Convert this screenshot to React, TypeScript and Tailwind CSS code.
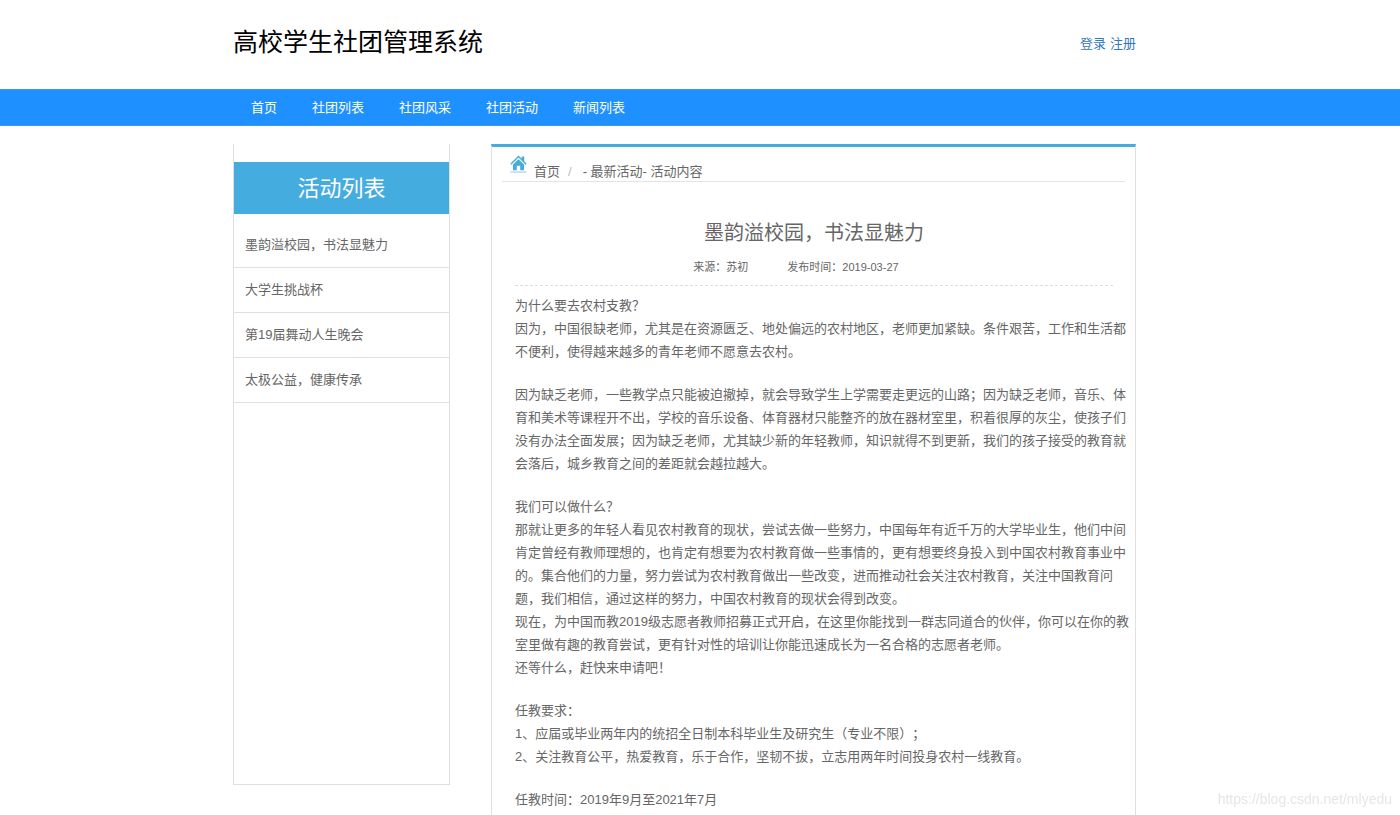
const navItems = ["首页", "社团列表", "社团风采", "社团活动", "新闻列表"];

const activities = [
  "墨韵溢校园，书法显魅力",
  "大学生挑战杯",
  "第19届舞动人生晚会",
  "太极公益，健康传承",
];

// each inner array is one block of the article, separated by a blank line
const articleBlocks = [
  [
    "为什么要去农村支教？",
    "因为，中国很缺老师，尤其是在资源匮乏、地处偏远的农村地区，老师更加紧缺。条件艰苦，工作和生活都不便利，使得越来越多的青年老师不愿意去农村。",
  ],
  [
    "因为缺乏老师，一些教学点只能被迫撤掉，就会导致学生上学需要走更远的山路；因为缺乏老师，音乐、体育和美术等课程开不出，学校的音乐设备、体育器材只能整齐的放在器材室里，积着很厚的灰尘，使孩子们没有办法全面发展；因为缺乏老师，尤其缺少新的年轻教师，知识就得不到更新，我们的孩子接受的教育就会落后，城乡教育之间的差距就会越拉越大。",
  ],
  [
    "我们可以做什么？",
    "那就让更多的年轻人看见农村教育的现状，尝试去做一些努力，中国每年有近千万的大学毕业生，他们中间肯定曾经有教师理想的，也肯定有想要为农村教育做一些事情的，更有想要终身投入到中国农村教育事业中的。集合他们的力量，努力尝试为农村教育做出一些改变，进而推动社会关注农村教育，关注中国教育问题，我们相信，通过这样的努力，中国农村教育的现状会得到改变。",
    "现在，为中国而教2019级志愿者教师招募正式开启，在这里你能找到一群志同道合的伙伴，你可以在你的教室里做有趣的教育尝试，更有针对性的培训让你能迅速成长为一名合格的志愿者老师。",
    "还等什么，赶快来申请吧！",
  ],
  [
    "任教要求：",
    "1、应届或毕业两年内的统招全日制本科毕业生及研究生（专业不限）；",
    "2、关注教育公平，热爱教育，乐于合作，坚韧不拔，立志用两年时间投身农村一线教育。",
  ],
  ["任教时间：2019年9月至2021年7月"],
];

const HomeIcon = () => {
  return (
    <svg className="h-[18px] w-[17px]" viewBox="0 0 17 18" fill="none" aria-hidden="true">
      <path d="M11.6 1.4h2.6v5.4l-2.6-2.4z" fill="#45acdf" />
      <path d="M0.8 9.2 8.5 1.6l7.7 7.6" stroke="#45acdf" strokeWidth="1.4" />
      <path d="M8.5 4.2 3 9.6v5.6h3.8v-4.4h3.4v4.4H14V9.6z" fill="#45acdf" />
      <path d="M0.5 17h16" stroke="#8ccbea" />
    </svg>
  );
};

const Header = () => {
  return (
    <header className="pr-[31px]">
      <div className="mx-auto flex h-[89px] max-w-[903px] items-start justify-between">
        <h1 className="pt-6 text-[25px] leading-[36px] text-black">高校学生社团管理系统</h1>
        <div className="flex gap-1 pt-[34px] leading-5 text-[#337ab7]">
          <a href="#login">登录</a>
          <a href="#register">注册</a>
        </div>
      </div>
    </header>
  );
};

const Nav = () => {
  return (
    <nav className="border-y border-[#3d97ee] bg-[#1e90ff] pr-[31px]">
      <ul className="mx-auto flex h-[35px] max-w-[903px] items-center gap-[35px] pl-[18px] text-white">
        {navItems.map((item) => (
          <li key={item}>
            <a href="#nav">{item}</a>
          </li>
        ))}
      </ul>
    </nav>
  );
};

const Sidebar = () => {
  return (
    <aside className="h-[641px] w-[217px] shrink-0 border-x border-b border-[#e0e0e0] pt-[18px]">
      <h2 className="flex h-[52px] items-center justify-center bg-[#45acdf] text-[22px] text-white">
        活动列表
      </h2>
      <ul className="pt-[9px]">
        {activities.map((activity) => (
          <li className="flex h-[45px] items-center border-b border-[#e0e0e0] pl-[11px]" key={activity}>
            <a href="#activity">{activity}</a>
          </li>
        ))}
      </ul>
    </aside>
  );
};

const Article = () => {
  return (
    <main className="min-w-0 flex-1 border-x border-t-3 border-x-[#e0e0e0] border-t-[#45acdf] pb-6">
      <div className="mx-[10px] flex h-[35px] items-end border-b border-[#e4e4e4] pl-2">
        <a href="#home" className="flex items-end gap-[7px]">
          <span className="pb-2">
            <HomeIcon />
          </span>
          <span className="leading-[18px]">首页</span>
        </a>
        <span className="px-2 leading-[18px] text-[#bbb]">/</span>
        <span className="pl-[3px] leading-[18px]">- 最新活动- 活动内容</span>
      </div>

      <article className="pl-[23px]">
        <div className="mr-[22px] border-b border-dashed border-[#dedede] pt-9 text-center">
          <h2 className="text-xl leading-[30px]">墨韵溢校园，书法显魅力</h2>
          <p className="flex justify-center gap-[39px] pt-[9px] pr-9 pb-2 text-[11px] leading-5">
            <span>来源：苏初</span>
            <span>发布时间：2019-03-27</span>
          </p>
        </div>
        <div className="mr-1 flex flex-col gap-5 pt-2 leading-[23px]">
          {articleBlocks.map((block) => (
            <div key={block[0]}>
              {block.map((text) => (
                <p key={text}>{text}</p>
              ))}
            </div>
          ))}
        </div>
      </article>
    </main>
  );
};

export default function App() {
  return (
    <div
      lang="zh-CN"
      className="min-h-screen bg-white font-['Liberation_Sans','Noto_Sans_CJK_SC',sans-serif] text-[13px] text-[#666] [text-spacing-trim:space-all]"
    >
      <Header />
      <Nav />
      <div className="pt-[18px] pr-[31px]">
        <div className="mx-auto flex max-w-[903px] items-start gap-[41px]">
          <Sidebar />
          <Article />
        </div>
      </div>
      <div className="fixed right-2 bottom-1 text-sm leading-6 text-[#e6e6e6]">
        https://blog.csdn.net/mlyedu
      </div>
    </div>
  );
}
